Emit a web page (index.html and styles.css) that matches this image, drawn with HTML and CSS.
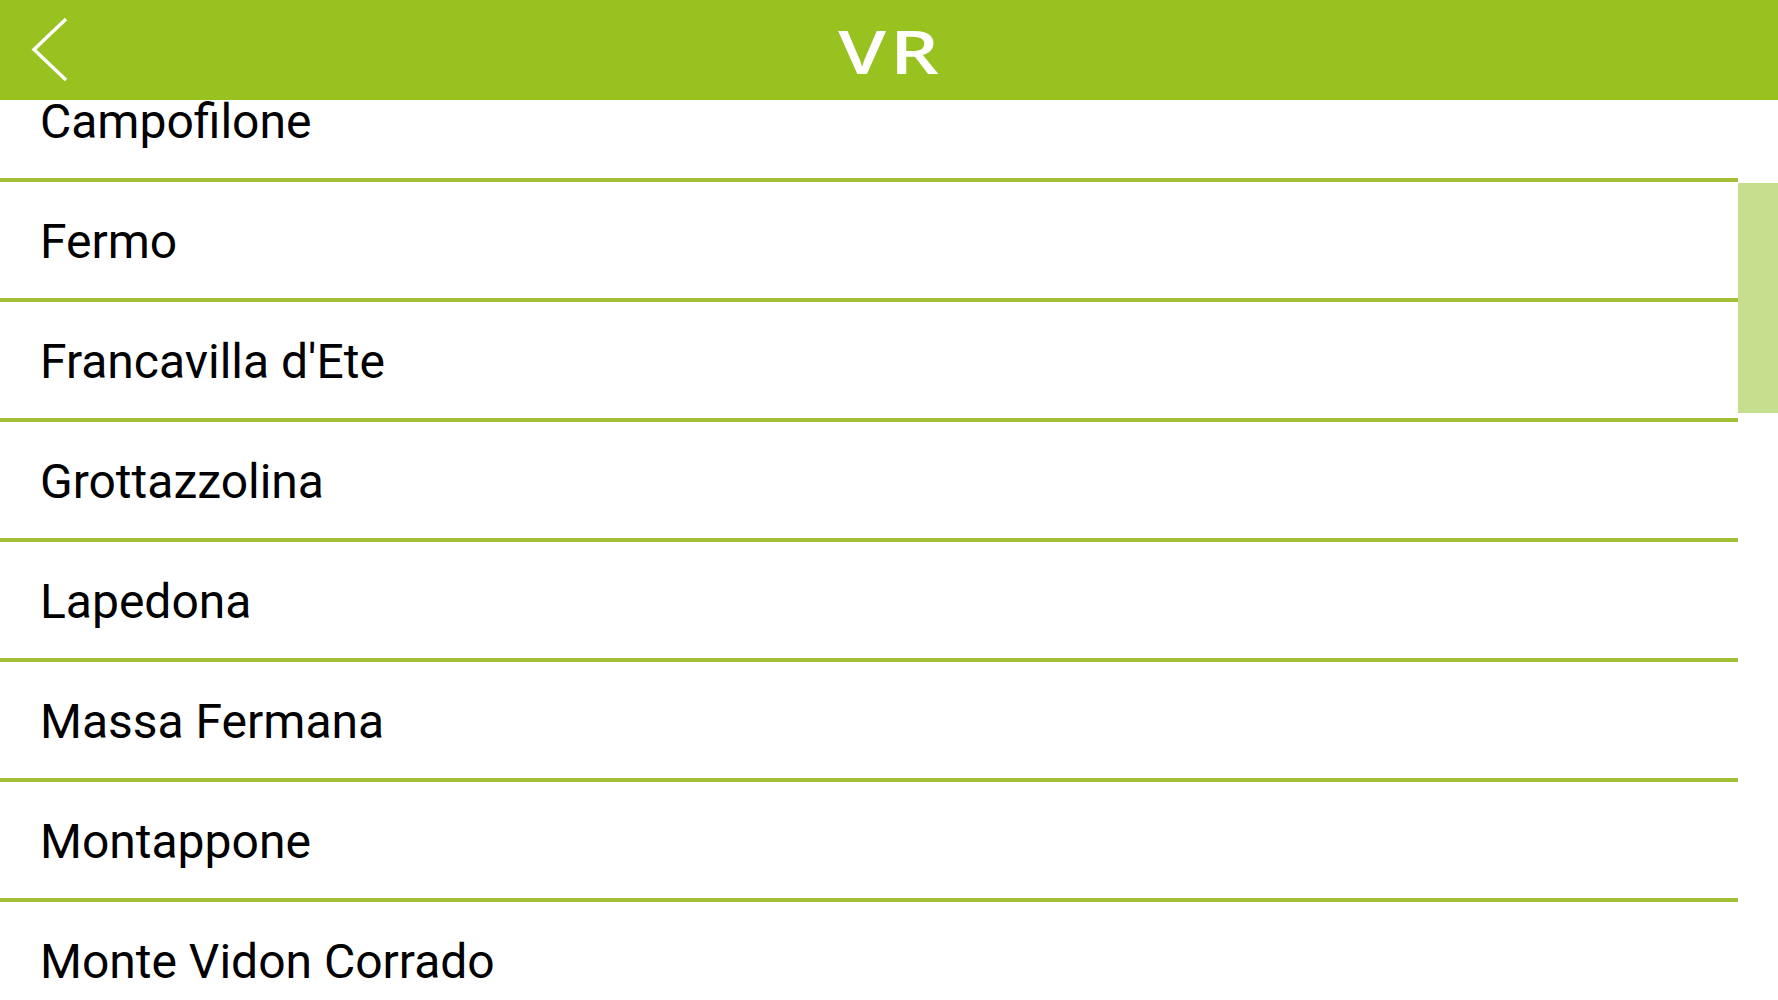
FILE: index.html
```html
<!DOCTYPE html>
<html lang="it">
<head>
<meta charset="utf-8">
<title>VR</title>
<link rel="stylesheet" href="styles.css">
</head>
<body>
<div class="app">
  <header class="topbar">
    <button class="back" aria-label="Indietro">
      <svg width="40" height="66" viewBox="0 0 40 66" fill="none">
        <path d="M36 3 L4 33.5 L36 64" stroke="#ffffff" stroke-width="3.4" stroke-linecap="butt" stroke-linejoin="miter"/>
      </svg>
    </button>
    <h1 class="title">VR</h1>
  </header>
  <div class="body">
    <div class="viewport">
      <ul class="list">
        <li class="row">Campofilone</li>
        <li class="row">Fermo</li>
        <li class="row">Francavilla d'Ete</li>
        <li class="row">Grottazzolina</li>
        <li class="row">Lapedona</li>
        <li class="row">Massa Fermana</li>
        <li class="row">Montappone</li>
        <li class="row">Monte Vidon Corrado</li>
      </ul>
    </div>
    <div class="track"><div class="thumb"></div></div>
  </div>
</div>
</body>
</html>
```
FILE: styles.css
```css
html, body {
  margin: 0;
  padding: 0;
  background: #ffffff;
}
body {
  width: 1778px;
  height: 1000px;
  overflow: hidden;
  font-family: Roboto, "Liberation Sans", sans-serif;
}
.app {
  display: flex;
  flex-direction: column;
  height: 1000px;
}
.topbar {
  flex: 0 0 100px;
  height: 100px;
  background: #98c21f;
  display: flex;
  align-items: center;
  justify-content: center;
  position: relative;
  z-index: 2;
}
.back {
  position: absolute;
  left: 30px;
  top: 16px;
  width: 40px;
  height: 66px;
  padding: 0;
  border: 0;
  background: transparent;
  display: block;
}
.back svg { display: block; }
.title {
  margin: 0;
  color: #ffffff;
  font-family: "Open Sans", "Liberation Sans", sans-serif;
  font-weight: 600;
  font-size: 59px;
  letter-spacing: 3px;
  line-height: 1;
  padding-left: 2px;
  padding-top: 2px;
  transform: scaleX(1.3);
}
.body {
  flex: 1 1 auto;
  display: flex;
  overflow: hidden;
}
.viewport {
  width: 1738px;
  overflow: hidden;
}
.list {
  list-style: none;
  margin: -38px 0 0 0;
  padding: 0;
}
.row {
  height: 113px;
  border-bottom: 4px solid #a3bf37;
  display: flex;
  align-items: center;
  padding-left: 40px;
  padding-top: 3px;
  box-sizing: content-box;
  font-size: 48px;
  color: #000000;
  line-height: 1;
}
.track {
  width: 40px;
  flex: 0 0 40px;
}
.thumb {
  margin-top: 83px;
  height: 230px;
  background: #c6de8d;
}
```
